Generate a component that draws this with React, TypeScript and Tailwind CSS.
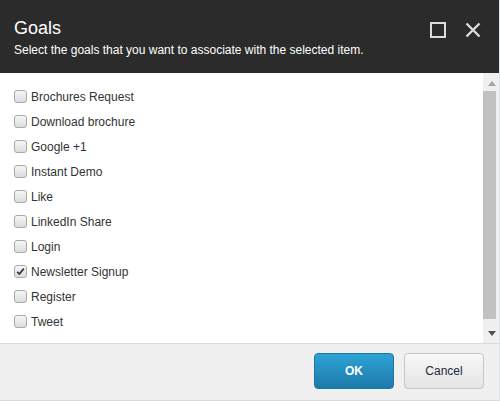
import React from 'react';

const goals = [
  { name: 'Brochures Request', checked: false },
  { name: 'Download brochure', checked: false },
  { name: 'Google +1', checked: false },
  { name: 'Instant Demo', checked: false },
  { name: 'Like', checked: false },
  { name: 'LinkedIn Share', checked: false },
  { name: 'Login', checked: false },
  { name: 'Newsletter Signup', checked: true },
  { name: 'Register', checked: false },
  { name: 'Tweet', checked: false },
];

function CheckBox({ checked }: { checked: boolean }) {
  return (
    <span className="flex h-[13px] w-[13px] shrink-0 items-center justify-center rounded-[3px] border border-[#a9a9a9] bg-gradient-to-b from-[#f6f6f6] to-[#dcdcdc]">
      {checked && (
        <svg width="9" height="9" viewBox="0 0 9 9">
          <path d="M1.2 4.8 L3.4 7 L7.8 1.6" fill="none" stroke="#3a3a3a" strokeWidth="1.8" />
        </svg>
      )}
    </span>
  );
}

export default function App() {
  return (
    <div className="flex h-[401px] w-[500px] bg-[#e1e6ea] font-['Liberation_Sans',Arial,sans-serif]">
      <div className="flex w-[499px] flex-col bg-white">
        {/* header */}
        <div className="flex h-[73px] shrink-0 bg-[#2b2b2b] px-[14px] pt-[18px]">
          <div className="flex-1">
            <h1 className="text-[18px] leading-[21px] text-white">Goals</h1>
            <p className="mt-[4px] text-[12px] leading-[14px] text-white">
              Select the goals that you want to associate with the selected item.
            </p>
          </div>
          <div className="flex gap-[19px] pt-[4px] pr-[4px]">
            <svg width="16" height="16" viewBox="0 0 16 16">
              <rect x="1" y="1" width="14" height="14" fill="none" stroke="#dcdcdc" strokeWidth="2" />
            </svg>
            <svg width="16" height="16" viewBox="0 0 16 16">
              <path d="M1.5 1.5 L14.5 14.5 M14.5 1.5 L1.5 14.5" stroke="#dcdcdc" strokeWidth="2.4" />
            </svg>
          </div>
        </div>

        {/* list + scrollbar */}
        <div className="flex h-[270px] shrink-0">
          <ul className="flex-1 pt-[11px] pl-[14px]">
            {goals.map((g) => (
              <li key={g.name} className="flex h-[25px] items-center gap-[4px] text-[12px] text-[#333]">
                <CheckBox checked={g.checked} />
                <span>{g.name}</span>
              </li>
            ))}
          </ul>
          <div className="flex w-[16px] flex-col bg-[#f0f0f0]">
            <div className="flex h-[18px] items-center justify-center pl-[1px] pt-[2px]">
              <svg width="8" height="5" viewBox="0 0 8 5">
                <path d="M0 5 L4 0 L8 5 Z" fill="#a5a5a5" />
              </svg>
            </div>
            <div className="h-[228px] w-[13px] bg-[#c1c1c1]" />
            <div className="flex flex-1 items-end justify-center pb-[7px] pl-[1px]">
              <svg width="8" height="5" viewBox="0 0 8 5">
                <path d="M0 0 L8 0 L4 5 Z" fill="#505050" />
              </svg>
            </div>
          </div>
        </div>

        {/* footer */}
        <div className="flex flex-1 justify-end gap-[10px] border-y border-[#dadada] bg-[#f0f0f0] pt-[9px] pr-[15px]">
          <button className="h-[36px] w-[80px] rounded-[4px] border border-[#1f75a2] bg-gradient-to-b from-[#2ea3d6] to-[#1c7aa9] text-[12px] font-bold text-white">
            OK
          </button>
          <button className="h-[36px] w-[80px] rounded-[4px] border border-[#c6c6c6] bg-gradient-to-b from-[#f8f8f8] to-[#e4e4e4] text-[12px] text-[#262640]">
            Cancel
          </button>
        </div>
      </div>
    </div>
  );
}
